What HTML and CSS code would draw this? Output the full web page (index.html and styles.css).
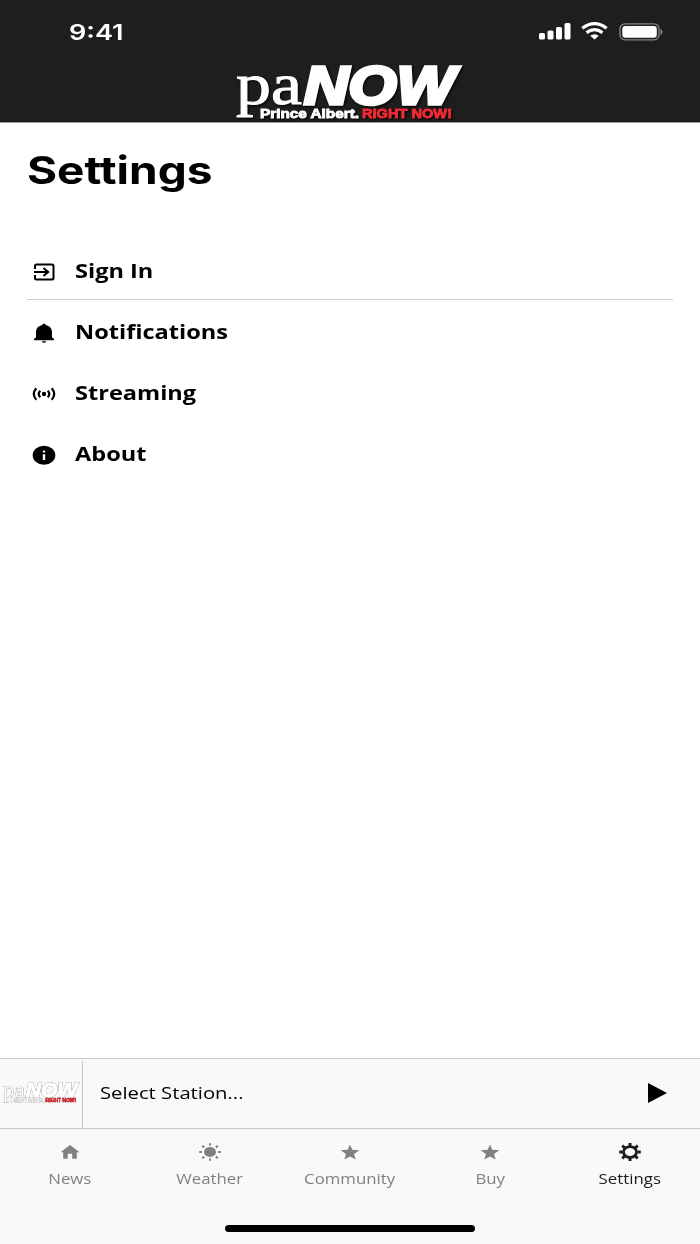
FILE: index.html
```html
<!DOCTYPE html>
<html lang="en">
<head>
  <meta charset="UTF-8">
  <meta name="viewport" content="width=device-width, initial-scale=1.0">
  <title>paNOW - Settings</title>
  <link rel="stylesheet" href="styles.css">
</head>
<body>
  <div class="app">
    <header class="header">
      <div class="status-bar">
        <span class="time">9:41</span>
        <svg class="status-icons" width="126" height="20" viewBox="0 0 126 20">
          <g fill="#fff">
            <rect x="0" y="12" width="6" height="6.500" rx="1.600"/>
            <rect x="8.500" y="9.500" width="6" height="9" rx="1.600"/>
            <rect x="17" y="6" width="6" height="12.500" rx="1.600"/>
            <rect x="25.500" y="2" width="6" height="16.500" rx="1.600"/>
            <path d="M55.500 18.500l4.300-3.700q-4.300-3-8.600 0z"/>
          </g>
          <path d="M43.300 7.200q12.200-9.200 24.400 0M47.500 11.600q8-5.800 16 0" fill="none" stroke="#fff" stroke-width="3.200"/>
          <rect x="81" y="2.800" width="39" height="16" rx="5" fill="none" stroke="#858585" stroke-width="1.300"/>
          <rect x="83.300" y="5" width="34.500" height="11.800" rx="3" fill="#fff"/>
          <path d="M122 8.500q2.500 2.500 0 5z" fill="#858585" stroke="#858585"/>
        </svg>
      </div>
      <svg class="logo" width="232" height="60" viewBox="0 0 232 60">
        <text class="logo-pa" x="2" y="42" textLength="66" lengthAdjust="spacingAndGlyphs">pa</text>
        <text class="logo-now" x="70" y="41.500" textLength="151" lengthAdjust="spacingAndGlyphs">NOW</text>
        <text class="logo-city" x="26" y="55.700" textLength="99" lengthAdjust="spacingAndGlyphs">Prince Albert.</text>
        <text class="logo-slogan" x="128" y="55.700" textLength="90" lengthAdjust="spacingAndGlyphs">RIGHT NOW!</text>
      </svg>
    </header>

    <main class="content">
      <h1>Settings</h1>
      <ul class="menu">
        <li class="divided">
          <svg width="24" height="20" viewBox="0 0 24 20" fill="none" stroke="#000" stroke-width="2">
            <path d="M3 7V4q0-1.500 1.500-1.500h15.500q1.500 0 1.500 1.500v12q0 1.500-1.500 1.500h-15.500Q3 17.500 3 16v-3M2 10h13M11.500 6l4.700 4-4.700 4"/>
          </svg>
          <span>Sign In</span>
        </li>
        <li>
          <svg width="24" height="20" viewBox="0 0 24 20">
            <path d="M12 0.500q1.600 0 1.700 1.600c4 .9 6.300 3.600 6.300 7.200v5l2.200 2v1H1.800v-1l2.200-2v-5c0-3.600 2.300-6.300 6.300-7.200Q10.400.5 12 .5zM9.800 18.200h4.400q-.5 1.500-2.200 1.500t-2.200-1.500z"/>
          </svg>
          <span>Notifications</span>
        </li>
        <li>
          <svg width="24" height="20" viewBox="0 0 24 20" fill="none" stroke="#000" stroke-width="2.200">
            <circle cx="12" cy="10" r="2.200" fill="#000" stroke="none"/>
            <path d="M8.300 6.800q-3.200 3.200 0 6.400M15.700 6.800q3.200 3.200 0 6.400M4.300 4.200q-5 5.800 0 11.600M19.700 4.200q5 5.800 0 11.600"/>
          </svg>
          <span>Streaming</span>
        </li>
        <li>
          <svg width="24" height="20" viewBox="0 0 24 20">
            <ellipse cx="12" cy="10.300" rx="11.300" ry="9.500"/>
            <path d="M10.800 5.500h2.400v2h-2.400zM10.800 9.200h2.400v5.800h-2.400z" fill="#fff"/>
          </svg>
          <span>About</span>
        </li>
      </ul>
    </main>

    <section class="player">
      <div class="station-logo">
        <svg class="logo logo-small" width="79" height="22" viewBox="0 0 232 60" preserveAspectRatio="none">
          <text class="logo-pa" x="2" y="42" textLength="66" lengthAdjust="spacingAndGlyphs">pa</text>
          <text class="logo-now" x="70" y="41.500" textLength="151" lengthAdjust="spacingAndGlyphs">NOW</text>
          <text class="logo-city" x="26" y="55.700" textLength="99" lengthAdjust="spacingAndGlyphs">Prince Albert.</text>
          <text class="logo-slogan" x="128" y="55.700" textLength="90" lengthAdjust="spacingAndGlyphs">RIGHT NOW!</text>
        </svg>
      </div>
      <span class="station-name">Select Station...</span>
      <svg class="play" width="19" height="20" viewBox="0 0 19 20"><path d="M0 0l19 10L0 20z"/></svg>
    </section>

    <nav class="tabs">
      <a class="tab">
        <svg width="22" height="18" viewBox="0 0 22 18"><path d="M11 2l9.500 7.200h-2.700v6.600h-4.600v-5H8.800v5H4.200V9.200H1.500z"/></svg>
        <span>News</span>
      </a>
      <a class="tab">
        <svg width="22" height="18" viewBox="0 0 22 18">
          <ellipse cx="11" cy="9" rx="6" ry="5"/>
          <path d="M11 .3v2.200M11 15.500v2.200M.2 9h2.700M19.100 9h2.700M3.200 2.800l2 1.600M18.800 2.800l-2 1.600M3.200 15.200l2-1.600M18.800 15.200l-2-1.600" fill="none" stroke="#808080" stroke-width="2"/>
        </svg>
        <span>Weather</span>
      </a>
      <a class="tab">
        <svg width="22" height="18" viewBox="0 0 22 18"><path d="M11 1.500l2.300 5.200 7.200.5-5.500 3.900 1.700 5.300L11 13.500l-5.700 2.900L7 11.100 1.500 7.200l7.200-.5z"/></svg>
        <span>Community</span>
      </a>
      <a class="tab">
        <svg width="22" height="18" viewBox="0 0 22 18"><path d="M11 1.500l2.300 5.200 7.200.5-5.500 3.900 1.700 5.300L11 13.500l-5.700 2.900L7 11.100 1.500 7.200l7.200-.5z"/></svg>
        <span>Buy</span>
      </a>
      <a class="tab active">
        <svg width="22" height="18" viewBox="0 0 22 18" fill="none" stroke="#1e1e1e">
          <ellipse cx="11" cy="9" rx="6.500" ry="5.400" stroke-width="2.800"/>
          <path d="M11 0v3M11 15v3M.2 9h3.300M18.500 9h3.300M3.200 2.700l2.600 2.100M18.800 2.700l-2.600 2.100M3.200 15.300l2.600-2.100M18.800 15.300l-2.600-2.100" stroke-width="3"/>
        </svg>
        <span>Settings</span>
      </a>
    </nav>
    <div class="home-indicator"></div>
  </div>
</body>
</html>
```

FILE: styles.css
```css
* { box-sizing: border-box; margin: 0; padding: 0; }
body {
  font-family: 'Open Sans', 'Noto Sans', sans-serif;
  background: #fff;
  color: #000;
}
.app {
  display: flex;
  flex-direction: column;
  height: 1244px;
  overflow: hidden;
}

/* header */
.header {
  display: flex;
  flex-direction: column;
  align-items: center;
  height: 123px;
  background: #1e1e1e;
  border-bottom: 1px solid #999;
}
.status-bar {
  display: flex;
  justify-content: space-between;
  width: 100%;
  height: 62px;
  padding: 21px 35px 0 69px;
}
.time {
  font-family: Inter, sans-serif;
  font-size: 22px;
  font-weight: 600;
  line-height: 22px;
  color: #fff;
  transform: scaleX(1.23);
  transform-origin: left;
}
.logo { display: block; overflow: visible; }
.logo text { fill: #fff; }
.logo .logo-pa {
  font-family: 'Liberation Serif', serif;
  font-size: 60px;
  stroke: #fff;
  stroke-width: 1px;
}
.logo .logo-now {
  font-family: 'Liberation Sans', sans-serif;
  font-size: 54px;
  font-weight: bold;
  font-style: italic;
  stroke: #fff;
  stroke-width: 3.5px;
}
.logo .logo-city,
.logo .logo-slogan {
  font-family: 'Liberation Sans', sans-serif;
  font-size: 13px;
  font-weight: bold;
  stroke: #fff;
  stroke-width: 0.9px;
}
.logo .logo-slogan { fill: #ee2b34; stroke: #ee2b34; }
.header .logo { filter: drop-shadow(1px 1px 1px #000); }

/* settings list */
.content { flex: 1; padding: 24px 27px 0; }
h1 {
  width: max-content;
  font-family: Inter, sans-serif;
  font-size: 38px;
  font-weight: 700;
  line-height: 46px;
  transform: scaleX(1.21);
  transform-origin: left;
}
.menu { list-style: none; margin-top: 46px; }
.menu li {
  display: flex;
  align-items: center;
  height: 61px;
  padding-left: 5px;
}
.menu svg { margin-top: 5px; }
.menu span {
  margin: 2px 0 0 18.500px;
  font-size: 19.500px;
  font-weight: 700;
  transform: scaleX(1.208);
  transform-origin: left;
}
.menu .divided { border-bottom: 1px solid #ccc; }

/* player */
.player {
  display: flex;
  align-items: center;
  height: 70px;
  background: #f9f9f9;
  border-top: 1px solid #c8c8c8;
}
.station-logo {
  display: flex;
  align-items: center;
  justify-content: center;
  width: 83px;
  height: 67px;
  margin-top: 2px;
  padding-bottom: 4px;
  border-right: 1px solid #c8c8c8;
}
.logo-small { filter: drop-shadow(0.5px 0.5px 0.5px #333); }
.station-name {
  flex: 1;
  margin: -2px 0 0 17px;
  font-size: 17px;
  transform: scaleX(1.19);
  transform-origin: left;
}
.play { margin: -2px 33px 0 0; }

/* bottom tabs */
.tabs {
  display: flex;
  height: 92px;
  padding-top: 14px;
  background: #f9f9f9;
  border-top: 1px solid #c8c8c8;
}
.tab {
  display: flex;
  flex: 1;
  flex-direction: column;
  align-items: center;
  color: #808080;
  fill: #808080;
}
.tab span {
  margin-top: 8px;
  font-size: 13.900px;
  line-height: 20px;
  transform: scaleX(1.21);
}
.tab.active { color: #1e1e1e; }
.home-indicator {
  height: 24px;
  padding-top: 5px;
  background: #f9f9f9;
}
.home-indicator::before {
  content: '';
  display: block;
  width: 250px;
  height: 7px;
  margin: 0 auto;
  border-radius: 4px;
  background: #000;
}
```
